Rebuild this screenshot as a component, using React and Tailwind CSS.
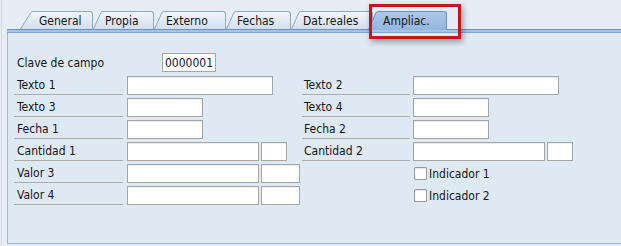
import React from "react";

function Tab({ label, slant, bodyClass, selected, z }) {
  const fillId = selected ? "tabSel" : "tabUn";
  const stroke = selected ? "#6f91bf" : "#8da7c8";
  const h = selected ? 19 : 18;
  return (
    <div className={selected ? "relative flex h-[19px] -mb-[1px]" : "relative flex h-[18px]"} style={{ zIndex: z }}>
      <svg width={slant} height={h} className="block shrink-0">
        <path d={`M0 ${h} L${slant - 2} 1.5 Q${slant - 1} 0.5 ${slant} 0.5 L${slant} ${h} Z`} fill={`url(#${fillId})`} />
        <path d={`M0.5 ${h} L${slant - 2} 1.5 Q${slant - 1} 0.5 ${slant} 0.5`} fill="none" stroke={stroke} strokeWidth="1" />
      </svg>
      <div
        className={
          selected
            ? "flex items-center h-[19px] border-t border-r border-[#6f91bf] rounded-tr-[3px] bg-gradient-to-b from-[#adc8e9] to-[#94b6df] " + bodyClass
            : "flex items-center h-[18px] border-t border-r border-[#8da7c8] rounded-tr-[3px] bg-gradient-to-b from-[#f1f5fa] to-[#d2dfee] " + bodyClass
        }
      >
        {label}
      </div>
    </div>
  );
}

function Input({ className }) {
  return <div className={"h-[19px] bg-white border border-[#a5a5a5] shadow-[inset_0_1px_1px_rgba(0,0,0,0.08)] " + className} />;
}

function Label({ children, className }) {
  return (
    <div className={"h-[19px] flex items-center border-b border-[#acacac] " + className}>{children}</div>
  );
}

function Check({ label }) {
  return (
    <div className="flex items-center h-[19px] ml-[1px]">
      <div className="w-[13px] h-[13px] bg-white border border-[#9a9a9a] rounded-[1px] shadow-[inset_0_1px_1px_rgba(0,0,0,0.1)]" />
      <span className="ml-[2px]">{label}</span>
    </div>
  );
}

export default function App() {
  return (
    <div className="relative w-[621px] h-[246px] overflow-hidden bg-[#e7edf5] text-[12px] leading-none text-[#151515] font-['DejaVu_Sans_Condensed','Liberation_Sans',Arial,sans-serif]">
      <svg width="0" height="0" className="absolute">
        <defs>
          <linearGradient id="tabUn" x1="0" y1="0" x2="0" y2="1">
            <stop offset="0" stopColor="#f1f5fa" />
            <stop offset="1" stopColor="#d2dfee" />
          </linearGradient>
          <linearGradient id="tabSel" x1="0" y1="0" x2="0" y2="1">
            <stop offset="0" stopColor="#adc8e9" />
            <stop offset="1" stopColor="#94b6df" />
          </linearGradient>
        </defs>
      </svg>
      <div className="absolute left-[1px] top-0 bottom-0 w-[1px] bg-[#d3dae3]" />

      {/* tab strip */}
      <div className="flex items-end h-[29px] pt-[11px] pl-[20px]">
        <Tab label="General" slant={13} bodyClass="w-[60px] pl-[6px]" z={6} />
        <Tab label="Propia" slant={10} bodyClass="w-[51px] pl-[2px]" z={5} />
        <Tab label="Externo" slant={10} bodyClass="w-[62px] pl-[2px]" z={4} />
        <Tab label="Fechas" slant={10} bodyClass="w-[55px] pl-[1px]" z={3} />
        <Tab label="Dat.reales" slant={10} bodyClass="w-[72px] pl-[2px]" z={2} />
        <div className="-ml-[5px] flex relative z-20">
          <Tab label="Ampliac." slant={10} bodyClass="w-[69px] pl-[5px]" selected z={10} />
        </div>
      </div>

      {/* bar */}
      <div className="ml-[7px] h-[4px] border-t border-b border-t-[#6f91bf] border-b-[#86a6cf] bg-[#a7c3e4]" />

      {/* panel */}
      <div className="ml-[7px] h-[211px] border-l border-b border-[#9fb8d6] bg-[#dfe9f4] pl-[6px] pt-[20px]">
        <div className="flex h-[19px]">
          <div className="w-[148px] flex items-center pl-[3px]">Clave de campo</div>
          <div className="w-[54px] h-[19px] bg-white border border-[#a5a5a5] flex items-center pl-[2px] text-[#141433]">0000001</div>
        </div>

        <div className="mt-[4px] flex flex-col gap-[3px]">
          <div className="flex">
            <div className="w-[288px] flex gap-[4px]">
              <Label className="w-[109px] pl-[3px]">Texto 1</Label>
              <Input className="w-[146px]" />
            </div>
            <div className="flex gap-[3px]">
              <Label className="w-[108px] pl-[2px]">Texto 2</Label>
              <Input className="w-[146px]" />
            </div>
          </div>

          <div className="flex">
            <div className="w-[288px] flex gap-[4px]">
              <Label className="w-[109px] pl-[3px]">Texto 3</Label>
              <Input className="w-[76px]" />
            </div>
            <div className="flex gap-[3px]">
              <Label className="w-[108px] pl-[2px]">Texto 4</Label>
              <Input className="w-[76px]" />
            </div>
          </div>

          <div className="flex">
            <div className="w-[288px] flex gap-[4px]">
              <Label className="w-[109px] pl-[3px]">Fecha 1</Label>
              <Input className="w-[76px]" />
            </div>
            <div className="flex gap-[3px]">
              <Label className="w-[108px] pl-[2px]">Fecha 2</Label>
              <Input className="w-[76px]" />
            </div>
          </div>

          <div className="flex">
            <div className="w-[288px] flex gap-[4px]">
              <Label className="w-[109px] pl-[3px]">Cantidad 1</Label>
              <div className="flex gap-[2px]">
                <Input className="w-[132px]" />
                <Input className="w-[26px]" />
              </div>
            </div>
            <div className="flex gap-[3px]">
              <Label className="w-[108px] pl-[2px]">Cantidad 2</Label>
              <div className="flex gap-[2px]">
                <Input className="w-[132px]" />
                <Input className="w-[26px]" />
              </div>
            </div>
          </div>

          <div className="flex">
            <div className="w-[288px] flex gap-[4px]">
              <Label className="w-[109px] pl-[3px]">Valor 3</Label>
              <div className="flex gap-[2px]">
                <Input className="w-[132px]" />
                <Input className="w-[39px]" />
              </div>
            </div>
            <div className="flex pl-[111px]">
              <Check label="Indicador 1" />
            </div>
          </div>

          <div className="flex">
            <div className="w-[288px] flex gap-[4px]">
              <Label className="w-[109px] pl-[3px]">Valor 4</Label>
              <div className="flex gap-[2px]">
                <Input className="w-[132px]" />
                <Input className="w-[39px]" />
              </div>
            </div>
            <div className="flex pl-[111px]">
              <Check label="Indicador 2" />
            </div>
          </div>
        </div>
      </div>

      {/* highlight box */}
      <div className="absolute left-[369px] top-[4px] w-[92px] h-[35px] border-[3px] border-[#c4161c] shadow-[2px_3px_6px_rgba(0,0,0,0.35)] z-30" />
    </div>
  );
}
